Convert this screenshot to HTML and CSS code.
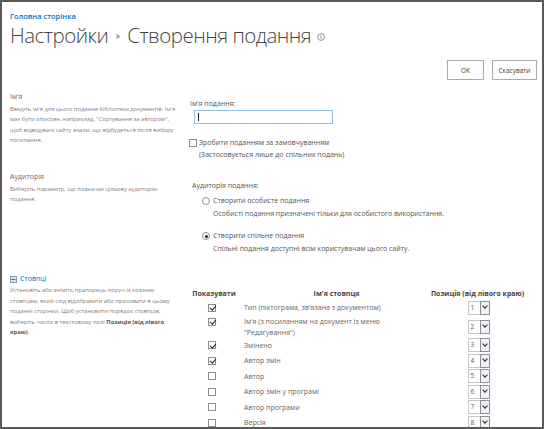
FILE: index.html
```html
<!DOCTYPE html>
<html lang="uk">
<head>
<meta charset="utf-8">
<title>Створення подання</title>
<link rel="stylesheet" href="styles.css">
</head>
<body>
<div class="page">
  <div class="crumb"><a href="#">Головна сторінка</a></div>
  <h1 class="title">
    <span>Настройки</span>
    <svg class="sep" width="5" height="7" viewBox="0 0 5 7"><polygon points="0.5,0.5 4.5,3.5 0.5,6.5" fill="#a6a6a6"/></svg>
    <span>Створення подання</span>
    <svg class="info" width="8" height="8" viewBox="0 0 8 8"><circle cx="4" cy="4" r="3.4" fill="none" stroke="#777" stroke-width="0.8"/><rect x="3.6" y="3.3" width="0.8" height="2.6" fill="#777"/><rect x="3.6" y="2" width="0.8" height="0.8" fill="#777"/></svg>
  </h1>
  <div class="toolbar">
    <button class="btn btn-ok">OK</button>
    <button class="btn btn-cancel">Скасувати</button>
  </div>

  <section class="sec sec-name">
    <div class="side">
      <div class="side-title">Ім'я</div>
      <p class="side-desc">Введіть ім'я для цього подання бібліотеки документів. Ім'я має бути описове, наприклад, "Сортування за автором", щоб відвідувачі сайту знали, що відбудеться після вибору посилання.</p>
    </div>
    <div class="main">
      <div class="field-label">Ім'я подання:</div>
      <div class="input"><span class="caret"></span></div>
      <div class="check-row">
        <span class="cb"></span>
        <div class="check-text">Зробити поданням за замовчуванням<br>(Застосовується лише до спільних подань)</div>
      </div>
    </div>
  </section>

  <section class="sec sec-aud">
    <div class="side">
      <div class="side-title">Аудиторія</div>
      <p class="side-desc">Виберіть параметр, що позначає цільову аудиторію подання.</p>
    </div>
    <div class="main">
      <div class="field-label aud-label">Аудиторія подання:</div>
      <div class="radio-opt">
        <div class="radio-row"><span class="radio"></span><span>Створити особисте подання</span></div>
        <div class="radio-desc">Особисті подання призначені тільки для особистого використання.</div>
      </div>
      <div class="radio-opt">
        <div class="radio-row"><span class="radio on"></span><span>Створити спільне подання</span></div>
        <div class="radio-desc">Спільні подання доступні всім користувачам цього сайту.</div>
      </div>
    </div>
  </section>

  <section class="sec sec-cols">
    <div class="side">
      <div class="side-title link-title">
        <svg class="collapse" width="7" height="7" viewBox="0 0 7 7"><rect x="0.5" y="0.5" width="6" height="6" fill="#dfe3e8" stroke="#8a9aaa" stroke-width="1"/><rect x="1.5" y="3" width="4" height="1" fill="#55697f"/></svg>
        <span>Стовпці</span>
      </div>
      <p class="side-desc">Установіть або зніміть прапорець поруч із кожним стовпцем, який слід відобразити або приховати в цьому поданні сторінки. Щоб установити порядок стовпців, виберіть число в текстовому полі <b>Позиція (від лівого краю)</b>.</p>
    </div>
    <div class="main">
      <div class="grid">
        <div class="gh gh-show">Показувати</div>
        <div class="gh gh-name">Ім'я стовпця</div>
        <div class="gh gh-pos">Позиція (від лівого краю)</div>

        <div class="gc c-show"><span class="cb on"></span></div>
        <div class="gc c-name">Тип (піктограма, зв'язана з документом)</div>
        <div class="gc c-pos"><span class="sel"><span class="sel-v">1</span><span class="sel-a"></span></span></div>

        <div class="gc c-show top"><span class="cb on"></span></div>
        <div class="gc c-name">Ім'я (з посиланням на документ із меню "Редагування")</div>
        <div class="gc c-pos"><span class="sel"><span class="sel-v">2</span><span class="sel-a"></span></span></div>

        <div class="gc c-show"><span class="cb on"></span></div>
        <div class="gc c-name">Змінено</div>
        <div class="gc c-pos"><span class="sel"><span class="sel-v">3</span><span class="sel-a"></span></span></div>

        <div class="gc c-show"><span class="cb on"></span></div>
        <div class="gc c-name">Автор змін</div>
        <div class="gc c-pos"><span class="sel"><span class="sel-v">4</span><span class="sel-a"></span></span></div>

        <div class="gc c-show"><span class="cb"></span></div>
        <div class="gc c-name">Автор</div>
        <div class="gc c-pos"><span class="sel"><span class="sel-v">5</span><span class="sel-a"></span></span></div>

        <div class="gc c-show"><span class="cb"></span></div>
        <div class="gc c-name">Автор змін у програмі</div>
        <div class="gc c-pos"><span class="sel"><span class="sel-v">6</span><span class="sel-a"></span></span></div>

        <div class="gc c-show"><span class="cb"></span></div>
        <div class="gc c-name">Автор програми</div>
        <div class="gc c-pos"><span class="sel"><span class="sel-v">7</span><span class="sel-a"></span></span></div>

        <div class="gc c-show"><span class="cb"></span></div>
        <div class="gc c-name">Версія</div>
        <div class="gc c-pos"><span class="sel"><span class="sel-v">8</span><span class="sel-a"></span></span></div>

        <div class="gc c-show"><span class="cb"></span></div>
        <div class="gc c-name">Вміст</div>
        <div class="gc c-pos"><span class="sel"><span class="sel-v">9</span><span class="sel-a"></span></span></div>
      </div>
    </div>
  </section>
</div>
</body>
</html>
```

FILE: styles.css
```css
* { box-sizing: border-box; }
html, body { margin: 0; padding: 0; background: #fff; }
body {
  font-family: "Open Sans", "Noto Sans", sans-serif;
  color: #444;
}
.page {
  width: 544px;
  height: 429px;
  border: 2px solid #5a5a5a;
  overflow: hidden;
  padding: 0 0 0 8px;
}
.crumb {
  padding-top: 9px;
  font-size: 7.5px;
  line-height: 10px;
  font-weight: 600;
}
.crumb a { color: #0072c6; text-decoration: none; }
.title {
  margin: 1px 0 0 0;
  height: 26px;
  font-size: 20.5px;
  line-height: 26px;
  font-weight: 300;
  color: #444;
  display: flex;
  align-items: center;
  letter-spacing: -0.5px;
}
.title .sep { margin: 3px 6px 0 8px; }
.title .info { margin: 3px 0 0 6px; }
.toolbar {
  display: flex;
  justify-content: flex-end;
  gap: 8px;
  margin-top: 12px;
  padding-right: 5px;
}
.btn {
  height: 20px;
  border: 1px solid #ababab;
  background: #fdfdfd;
  font-family: inherit;
  font-size: 6.5px;
  color: #444;
  padding: 0;
}
.btn-ok { width: 37px; }
.btn-cancel { width: 45px; }

.sec {
  display: grid;
  grid-template-columns: 178px 1fr;
  align-items: start;
}
.side-title {
  font-size: 7px;
  line-height: 10px;
  font-weight: 400;
  color: #6a6a6a;
}
.side-desc {
  margin: 2px 0 0 0;
  font-size: 5.8px;
  line-height: 10.4px;
  color: #808080;
  width: 170px;
}
.side-desc b { color: #555; font-weight: 700; }

.sec-name { margin-top: 12px; }
.sec-name .main { padding-top: 7px; }
.field-label {
  font-size: 7px;
  line-height: 10px;
  padding-left: 2px;
  color: #555;
}
.input {
  margin: 1px 0 0 6px;
  width: 139px;
  height: 14px;
  border: 1px solid #92c0e0;
  position: relative;
}
.caret {
  position: absolute;
  left: 3px;
  top: 2px;
  width: 1px;
  height: 8px;
  background: #222;
}
.check-row {
  display: flex;
  align-items: flex-start;
  margin-top: 13px;
  padding-left: 1px;
}
.check-row .cb { margin-top: 2px; }
.check-text {
  font-size: 7px;
  line-height: 12px;
  margin-left: 2px;
  color: #555;
}
.cb {
  display: inline-block;
  width: 8px;
  height: 8px;
  border: 1px solid #8f8f8f;
  background: #fff;
  position: relative;
  flex: none;
}
.cb.on::after {
  content: "";
  position: absolute;
  left: 1.5px;
  top: -0.5px;
  width: 2.5px;
  height: 5px;
  border: solid #222;
  border-width: 0 1.3px 1.3px 0;
  transform: rotate(40deg);
}

.sec-aud { margin-top: 11px; }
.sec-aud .main { padding-top: 9px; }
.aud-label { padding-left: 4px; }
.radio-opt { padding-left: 14px; margin-top: 4px; }
.radio-opt + .radio-opt { margin-top: 10px; }
.radio-row {
  display: flex;
  align-items: center;
  gap: 3px;
  font-size: 7px;
  line-height: 12px;
  color: #555;
}
.radio {
  width: 8px;
  height: 8px;
  border: 1px solid #8f8f8f;
  border-radius: 50%;
  position: relative;
  flex: none;
}
.radio.on::after {
  content: "";
  position: absolute;
  left: 1.5px; top: 1.5px;
  width: 3px; height: 3px;
  border-radius: 50%;
  background: #222;
}
.radio-desc {
  padding-left: 11px;
  font-size: 7px;
  line-height: 12px;
  margin-top: 1px;
  color: #555;
}

.sec-cols { margin-top: 19px; }
.link-title {
  display: flex;
  align-items: center;
  gap: 3px;
  color: #0072c6;
  font-size: 7px;
}
.sec-cols .side-desc { margin-top: 1px; line-height: 10.6px; }
.sec-cols .main { padding-top: 12px; }
.grid {
  display: grid;
  grid-template-columns: 44px 189px 105px;
  align-items: center;
  padding-left: 4px;
}
.gh {
  font-size: 7px;
  font-weight: 700;
  line-height: 12px;
  padding: 2px 0 0 0;
  color: #444;
}
.gh-show { text-align: center; }
.gh-name { text-align: center; padding-left: 12px; }
.gh-pos { text-align: center; }
.gc {
  font-size: 7px;
  line-height: 11px;
  color: #666;
  min-height: 15.5px;
  display: flex;
  align-items: center;
}
.c-show { justify-content: center; padding-right: 4px; }
.c-show.top { align-items: flex-start; padding-top: 2px; align-self: stretch; }
.c-name { padding-left: 8px; padding-right: 4px; }
.c-pos { justify-content: center; padding-left: 2px; }
.sel {
  display: inline-flex;
  height: 14px;
}
.sel-v {
  width: 12px;
  height: 14px;
  border: 1px solid #c6c6c6;
  border-right: none;
  font-size: 6.5px;
  line-height: 12px;
  padding-left: 2px;
  color: #555;
}
.sel-a {
  width: 10px;
  height: 14px;
  border: 1px solid #8f8f8f;
  background: #eef2f7;
  position: relative;
}
.sel-a::after {
  content: "";
  position: absolute;
  left: 2.5px;
  top: 2.5px;
  width: 3px;
  height: 3px;
  border: solid #1c2a3a;
  border-width: 0 1.4px 1.4px 0;
  transform: rotate(45deg);
}
```
